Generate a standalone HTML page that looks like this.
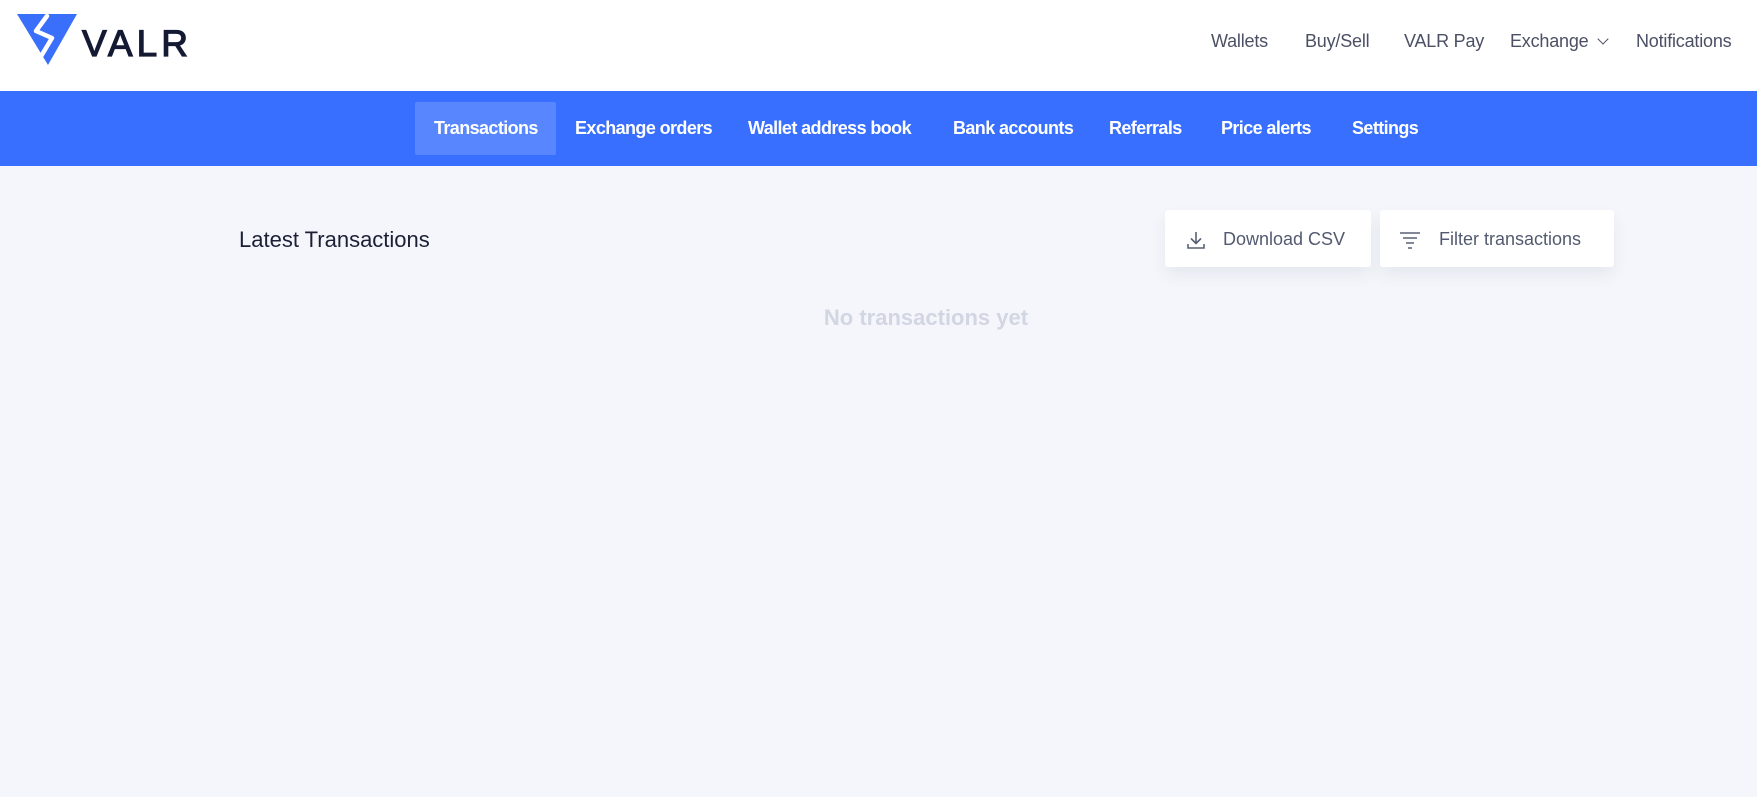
<!DOCTYPE html>
<html><head><meta charset="utf-8"><style>
*{margin:0;padding:0;box-sizing:border-box}
body{width:1757px;height:797px;background:#f4f6fb;font-family:"Liberation Sans",sans-serif;position:relative;overflow:hidden}
.hdr{position:absolute;left:0;top:0;width:1757px;height:91px;background:#fff}
.nav{position:absolute;top:31px;font-size:18px;color:#4b5064;white-space:nowrap;letter-spacing:-0.2px}
.bar{position:absolute;left:0;top:91px;width:1757px;height:75px;background:#386ffe}
.tab{position:absolute;top:118px;font-size:18px;color:#fff;font-weight:bold;white-space:nowrap;letter-spacing:-0.6px}
.act{position:absolute;left:415px;top:102px;width:141px;height:53px;background:#5886fe;border-radius:2px}
.btn{position:absolute;top:210px;height:57px;background:#fff;border-radius:3px;box-shadow:0 8px 16px rgba(40,50,90,0.07);font-size:18px;color:#535a70}
</style></head><body>
<div class="hdr">
<svg style="position:absolute;left:17px;top:14px" width="62" height="54" viewBox="0 0 62 54">
<path d="M0 0H60L31 51Z" fill="#3a6ffb"/>
<path d="M30 2L19 17L35 24L23 44" stroke="#fff" stroke-width="4.5" fill="none" stroke-linejoin="round" stroke-linecap="round"/>
</svg>
<div style="position:absolute;left:82px;top:23px;font-size:37px;color:#141a33;letter-spacing:4px;-webkit-text-stroke:1.2px #141a33">VALR</div>
<div class="nav" style="left:1211px">Wallets</div>
<div class="nav" style="left:1305px">Buy/Sell</div>
<div class="nav" style="left:1404px">VALR Pay</div>
<div class="nav" style="left:1510px">Exchange <span style="display:inline-block;width:8px;height:8px;border-right:1.6px solid #4b5064;border-bottom:1.6px solid #4b5064;transform:rotate(45deg);margin-left:6px;position:relative;top:-4px"></span></div>
<div class="nav" style="left:1636px">Notifications</div>
</div>
<div class="bar"></div>
<div class="act"></div>
<div class="tab" style="left:434px">Transactions</div>
<div class="tab" style="left:575px">Exchange orders</div>
<div class="tab" style="left:748px">Wallet address book</div>
<div class="tab" style="left:953px">Bank accounts</div>
<div class="tab" style="left:1109px">Referrals</div>
<div class="tab" style="left:1221px">Price alerts</div>
<div class="tab" style="left:1352px">Settings</div>
<div style="position:absolute;left:239px;top:227px;font-size:22px;color:#1b2035">Latest Transactions</div>
<div class="btn" style="left:1165px;width:206px">
<svg style="position:absolute;left:21px;top:20px" width="20" height="20" viewBox="0 0 20 20" fill="none" stroke="#5a6075" stroke-width="1.6"><path d="M10 2V13M5 8.5L10 13.5L15 8.5M2 14V18H18V14"/></svg>
<span style="position:absolute;left:58px;top:19px">Download CSV</span></div>
<div class="btn" style="left:1380px;width:234px">
<svg style="position:absolute;left:19px;top:20px" width="22" height="20" viewBox="0 0 22 20" fill="none" stroke="#5a6075" stroke-width="1.6"><path d="M1 3H21M4 8H18M7 13H15M9 18H13"/></svg>
<span style="position:absolute;left:59px;top:19px">Filter transactions</span></div>
<div style="position:absolute;left:0;width:1852px;text-align:center;top:305px;font-size:22px;font-weight:bold;color:#d2d6e3">No transactions yet</div>
</body></html>
